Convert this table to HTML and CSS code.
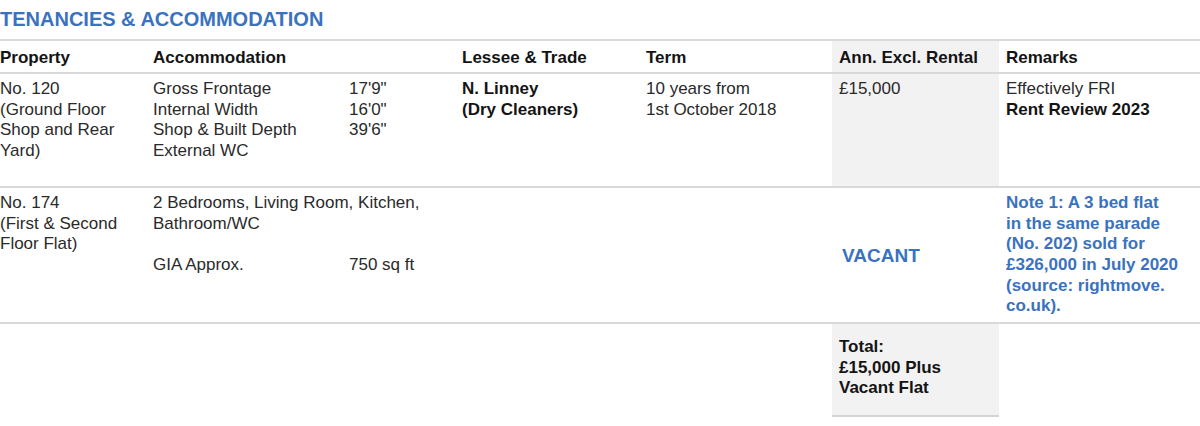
FILE: index.html
```html
<!DOCTYPE html>
<html lang="en">
<head>
<meta charset="utf-8">
<title>Tenancies &amp; Accommodation</title>
<link rel="stylesheet" href="styles.css">
</head>
<body>
<h1 class="title">TENANCIES &amp; ACCOMMODATION</h1>
<div class="table">
  <div class="row head">
    <div class="cell">Property</div>
    <div class="cell">Accommodation</div>
    <div class="cell">Lessee &amp; Trade</div>
    <div class="cell">Term</div>
    <div class="cell rent">Ann. Excl. Rental</div>
    <div class="cell remarks">Remarks</div>
  </div>
  <div class="row body r1">
    <div class="cell">No. 120<br>(Ground Floor<br>Shop and Rear<br>Yard)</div>
    <div class="cell">
      <div class="specs">
        <span>Gross Frontage</span><span>17'9"</span>
        <span>Internal Width</span><span>16'0"</span>
        <span>Shop &amp; Built Depth</span><span>39'6"</span>
        <span>External WC</span><span></span>
      </div>
    </div>
    <div class="cell strong">N. Linney<br>(Dry Cleaners)</div>
    <div class="cell">10 years from<br>1st October 2018</div>
    <div class="cell rent">£15,000</div>
    <div class="cell remarks">Effectively FRI<br><strong>Rent Review 2023</strong></div>
  </div>
  <div class="row body r2">
    <div class="cell">No. 174<br>(First &amp; Second<br>Floor Flat)</div>
    <div class="cell">
      <div>2 Bedrooms, Living Room, Kitchen,<br>Bathroom/WC</div>
      <div class="specs gap">
        <span>GIA Approx.</span><span>750 sq ft</span>
      </div>
    </div>
    <div class="cell"></div>
    <div class="cell"></div>
    <div class="cell vacant-cell"><span class="vacant">VACANT</span></div>
    <div class="cell remarks note">Note 1: A 3 bed flat<br>in the same parade<br>(No. 202) sold for<br>£326,000 in July 2020<br>(source: rightmove.<br>co.uk).</div>
  </div>
  <div class="row total">
    <div class="cell rent total-cell">Total:<br>£15,000 Plus<br>Vacant Flat</div>
  </div>
</div>
</body>
</html>
```
FILE: styles.css
```css
html, body {
  margin: 0;
  padding: 0;
  background: #ffffff;
}

body {
  font-family: "Liberation Sans", Arial, sans-serif;
  font-size: 17px;
  line-height: 20.7px;
  color: #2a2a2a;
  width: 1200px;
}

.title {
  margin: 0 0 8px 0;
  padding-top: 8px;
  font-size: 20px;
  line-height: 23px;
  font-weight: bold;
  color: #3a72bf;
}

.table {
  border-top: 2px solid #d9d9d9;
}

.row {
  display: grid;
  grid-template-columns: 153px 309px 184px 186px 167px 201px;
  border-bottom: 2px solid #d9d9d9;
}

.cell {
  min-width: 0;
}

.head .cell {
  padding: 6px 0 4px 0;
  font-weight: bold;
  color: #141414;
  line-height: 21px;
}

.r1 .cell {
  padding: 5px 0 24px 0;
}

.r2 .cell {
  padding: 5px 0 5px 0;
}

.row .rent {
  background: #f2f2f2;
  padding-left: 7px;
}

.row .remarks {
  padding-left: 7px;
}

.row .vacant-cell {
  padding-left: 10px;
  display: flex;
  align-items: center;
}

.vacant {
  font-size: 19px;
  font-weight: bold;
  color: #3a72bf;
  margin-top: 2px;
}

.specs {
  display: grid;
  grid-template-columns: 196px auto;
}

.specs.gap {
  margin-top: 20.7px;
}

.strong,
.remarks strong {
  font-weight: bold;
  color: #141414;
}

.note {
  font-weight: bold;
  color: #3a72bf;
}

.total {
  border-bottom: none;
}

.total .total-cell {
  grid-column: 5;
  padding: 13px 7px 16px 7px;
  font-weight: bold;
  color: #141414;
  border-bottom: 2px solid #d4d4d4;
}
```
